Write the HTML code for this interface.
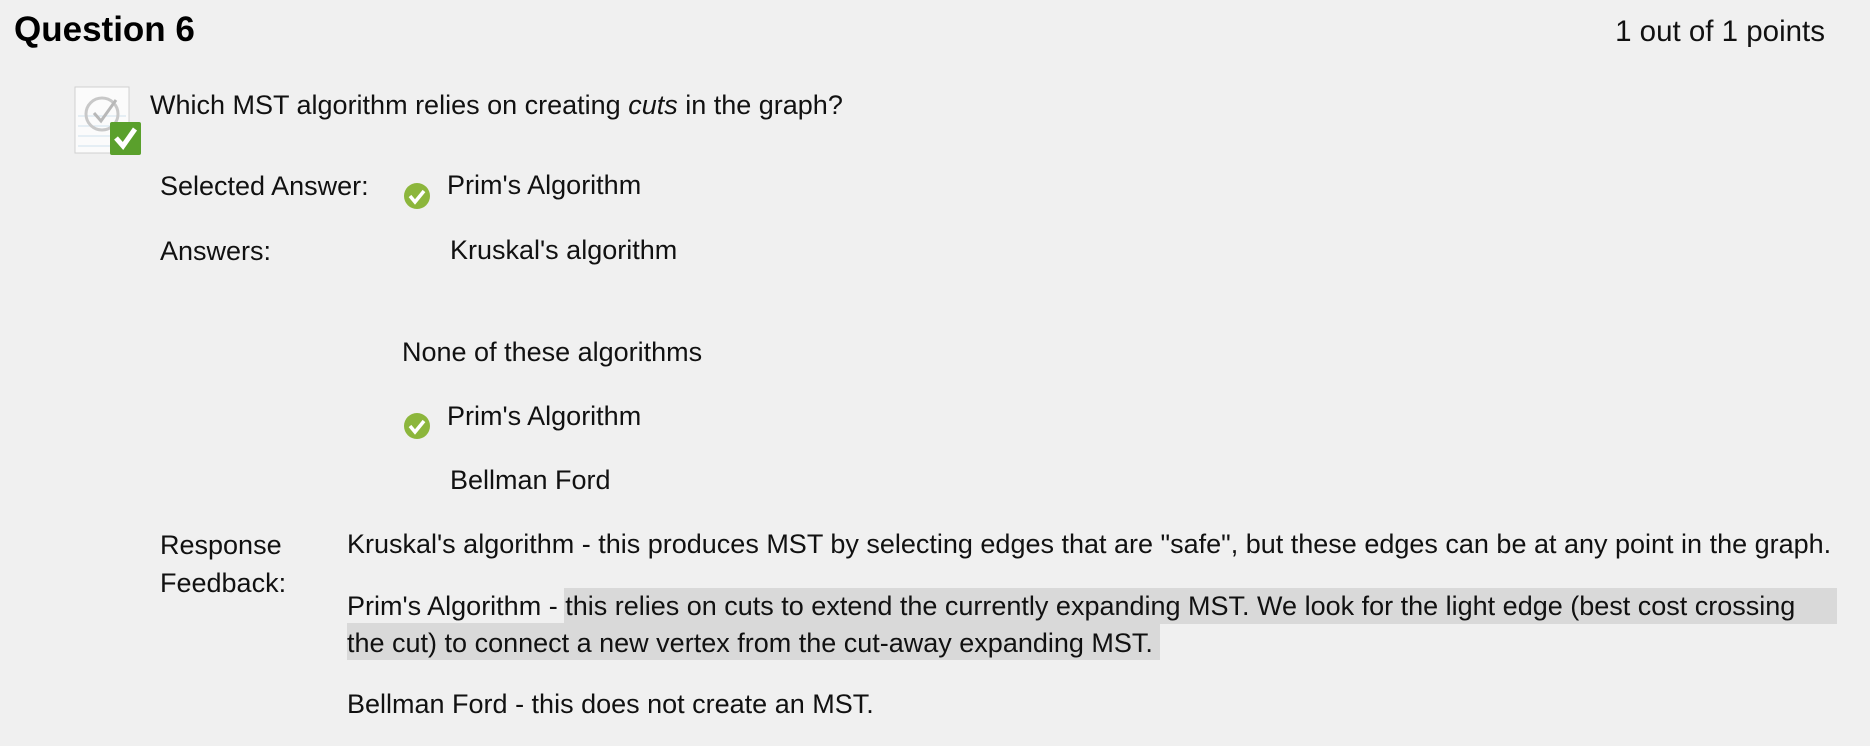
<!DOCTYPE html>
<html><head><meta charset="utf-8"><style>
html,body{margin:0;padding:0;background:#f0f0f0;width:1870px;height:746px;overflow:hidden}
body{font-family:"Liberation Sans",sans-serif;color:#111;position:relative}
.t{position:absolute;white-space:nowrap;font-size:27px;line-height:1}
.hl{background:#d9d9d9}
</style></head><body>
<div class="t" style="left:14px;top:12px;font-size:35px;font-weight:bold;color:#000">Question 6</div>
<div class="t" style="right:45px;top:17px;font-size:29.5px">1 out of 1 points</div>

<svg style="position:absolute;left:74px;top:86px" width="68" height="70" viewBox="0 0 68 70">
<rect x="1" y="1" width="54" height="66" fill="#fbfbfb" stroke="#d0d0d0"/>
<line x1="4" y1="30" x2="52" y2="30" stroke="#cfe0ee"/><line x1="4" y1="40" x2="52" y2="40" stroke="#cfe0ee"/><line x1="4" y1="50" x2="52" y2="50" stroke="#cfe0ee"/><line x1="4" y1="60" x2="52" y2="60" stroke="#cfe0ee"/>
<circle cx="28" cy="28" r="16" fill="none" stroke="#c8c8c8" stroke-width="3"/>
<path d="M20 27 L27 35 L42 14" fill="none" stroke="#b8b8b8" stroke-width="3"/>
<rect x="36" y="36" width="31" height="33" rx="2" fill="#5aa02c"/>
<path d="M42 52 L49 60 L61 43" fill="none" stroke="#fff" stroke-width="5"/>
</svg>
<div class="t" style="left:150px;top:92px">Which MST algorithm relies on creating <i>cuts</i> in the graph?</div>

<div class="t" style="left:160px;top:173px">Selected Answer:</div>
<svg style="position:absolute;left:403px;top:182px" width="28" height="28"><circle cx="14" cy="14" r="13" fill="#8cb63c"/><path d="M7 14 L12 20 L21 9" fill="none" stroke="#fff" stroke-width="3.5"/></svg>
<div class="t" style="left:447px;top:172px">Prim's Algorithm</div>

<div class="t" style="left:160px;top:238px">Answers:</div>
<div class="t" style="left:450px;top:237px">Kruskal's algorithm</div>
<div class="t" style="left:402px;top:339px">None of these algorithms</div>
<svg style="position:absolute;left:403px;top:412px" width="28" height="28"><circle cx="14" cy="14" r="13" fill="#8cb63c"/><path d="M7 14 L12 20 L21 9" fill="none" stroke="#fff" stroke-width="3.5"/></svg>
<div class="t" style="left:447px;top:403px">Prim's Algorithm</div>
<div class="t" style="left:450px;top:467px">Bellman Ford</div>

<div class="t" style="left:160px;top:532px">Response</div>
<div class="t" style="left:160px;top:570px">Feedback:</div>

<div class="t" style="left:347px;top:531px">Kruskal's algorithm - this produces MST by selecting edges that are "safe", but these edges can be at any point in the graph.</div>
<div style="position:absolute;left:564px;top:588px;width:1273px;height:36px" class="hl"></div>
<div style="position:absolute;left:347px;top:623px;width:813px;height:37px" class="hl"></div>
<div class="t" style="left:347px;top:593px">Prim's Algorithm - this relies on cuts to extend the currently expanding MST. We look for the light edge (best cost crossing</div>
<div class="t" style="left:347px;top:630px">the cut) to connect a new vertex from the cut-away expanding MST.</div>
<div class="t" style="left:347px;top:691px">Bellman Ford - this does not create an MST.</div>
</body></html>
